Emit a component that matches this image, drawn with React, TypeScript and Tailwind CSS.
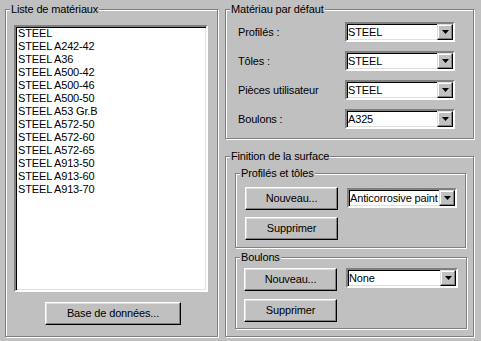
import type { ReactNode } from "react";

const materials = [
  "STEEL",
  "STEEL A242-42",
  "STEEL A36",
  "STEEL A500-42",
  "STEEL A500-46",
  "STEEL A500-50",
  "STEEL A53 Gr.B",
  "STEEL A572-50",
  "STEEL A572-60",
  "STEEL A572-65",
  "STEEL A913-50",
  "STEEL A913-60",
  "STEEL A913-70",
];

const defaults = [
  { label: "Profilés :", value: "STEEL" },
  { label: "Tôles :", value: "STEEL" },
  { label: "Pièces utilisateur", value: "STEEL" },
  { label: "Boulons :", value: "A325" },
];

export default function App() {
  return (
    <div className="w-[481px] h-[341px] bg-[#c0c0c0] text-black font-['Liberation_Sans',Arial,sans-serif] text-[11px] leading-[13px] tracking-[-0.15px] flex gap-[7px] pt-[3px] pl-[5px] overflow-hidden">
      {/* Material list */}
      <GroupBox title="Liste de matériaux" className="w-[213px] h-[334px]">
        <div className="pl-[8px] pt-[9px] flex flex-col items-start">
          <div className="w-[194px] h-[267px] bg-white border-2 border-t-[#808080] border-l-[#808080] border-b-white border-r-white shadow-[inset_1px_1px_0_#000,inset_-1px_-1px_0_#dfdfdf] pl-[2px]">
            {materials.map((m) => (
              <div key={m} className="whitespace-nowrap">
                {m}
              </div>
            ))}
          </div>
          <Button className="mt-[10px] ml-[31px] w-[136px]">Base de données...</Button>
        </div>
      </GroupBox>

      <div className="w-[249px] flex flex-col">
        {/* Default material */}
        <GroupBox title="Matériau par défaut" className="h-[136px]">
          <div className="pl-[12px] pt-[6px] flex flex-col gap-[9px]">
            {defaults.map((d) => (
              <div key={d.label} className="flex items-center h-[20px]">
                <span className="w-[107px]">{d.label}</span>
                <Combo value={d.value} className="w-[110px]" />
              </div>
            ))}
          </div>
        </GroupBox>

        {/* Surface finish */}
        <GroupBox title="Finition de la surface" className="mt-[11px] h-[187px]">
          <div className="pl-[9px] pt-[4px] flex flex-col">
            <GroupBox title="Profilés et tôles" className="w-[231px] h-[81px]">
              <div className="pl-[9px] pt-[7px] flex gap-[9px]">
                <div className="flex flex-col gap-[7px]">
                  <Button className="w-[93px]">Nouveau...</Button>
                  <Button className="w-[93px]">Supprimer</Button>
                </div>
                <Combo value="Anticorrosive paint" className="w-[110px] mt-[1px]" />
              </div>
            </GroupBox>
            <GroupBox title="Boulons" className="mt-[3px] w-[232px] h-[78px]">
              <div className="pl-[8px] pt-[4px] flex gap-[9px]">
                <div className="flex flex-col gap-[8px]">
                  <Button className="w-[93px]">Nouveau...</Button>
                  <Button className="w-[93px]">Supprimer</Button>
                </div>
                <Combo value="None" className="w-[112px]" />
              </div>
            </GroupBox>
          </div>
        </GroupBox>
      </div>
    </div>
  );
}

function GroupBox({
  title,
  className,
  children,
}: {
  title: string;
  className?: string;
  children: ReactNode;
}) {
  return (
    <fieldset
      className={`border border-[#808080] shadow-[inset_1px_1px_0_#fff,1px_1px_0_#fff] ${className ?? ""}`}
    >
      <legend className="ml-[4px] px-[1px] bg-[#c0c0c0]">{title}</legend>
      {children}
    </fieldset>
  );
}

function Button({ className, children }: { className?: string; children: ReactNode }) {
  return (
    <div
      className={`h-[23px] flex items-center justify-center bg-[#c0c0c0] border border-t-white border-l-white border-b-black border-r-black shadow-[inset_-1px_-1px_0_#808080,inset_1px_1px_0_#dfdfdf] ${className ?? ""}`}
    >
      {children}
    </div>
  );
}

function Combo({ value, className }: { value: string; className?: string }) {
  return (
    <div
      className={`h-[20px] flex bg-white border-2 border-t-[#808080] border-l-[#808080] border-b-white border-r-white shadow-[inset_1px_1px_0_#000,inset_-1px_-1px_0_#dfdfdf] ${className ?? ""}`}
    >
      <div className="flex-1 min-w-0 pl-[1px] pt-[2px] whitespace-nowrap overflow-hidden">{value}</div>
      <div className="w-[16px] shrink-0 h-full bg-[#c0c0c0] border border-t-[#dfdfdf] border-l-[#dfdfdf] border-b-black border-r-black shadow-[inset_-1px_-1px_0_#808080,inset_1px_1px_0_#fff] flex items-center justify-center">
        <svg width="7" height="4" viewBox="0 0 7 4">
          <path d="M0 0h7L3.5 4z" fill="#000" />
        </svg>
      </div>
    </div>
  );
}
